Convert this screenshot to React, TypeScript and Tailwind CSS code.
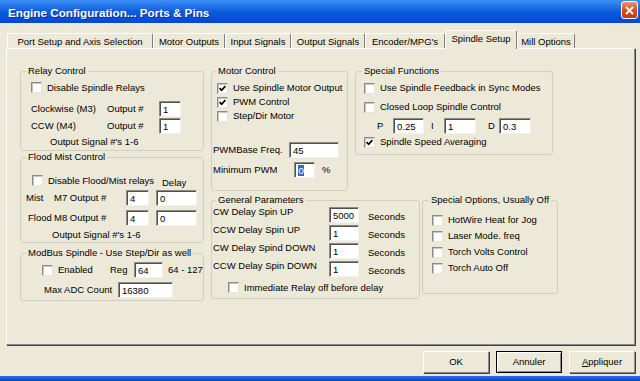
import React from "react";

const Check = ({ on }: { on?: boolean }) => (
  <span className="w-[11px] h-[11px] shrink-0 bg-white border border-t-[#8c8c8c] border-l-[#8c8c8c] border-r-[#e6e4d8] border-b-[#e6e4d8] shadow-[inset_1px_1px_0_#c9c7bb] flex items-center justify-center">
    {on && (
      <svg width="7" height="7" viewBox="0 0 7 7">
        <path d="M0.6 3.2 L2.6 5.3 L6.4 1.2" stroke="#000" strokeWidth="1.7" fill="none" />
      </svg>
    )}
  </span>
);

const Field = ({ className, children }: { className: string; children?: React.ReactNode }) => (
  <div className={`h-[16px] shrink-0 bg-white border border-t-[#8a8a8a] border-l-[#8a8a8a] border-r-[#f3f2ec] border-b-[#f3f2ec] shadow-[inset_1px_1px_0_#505050] flex items-center pl-[3px] pt-[1px] ${className}`}>
    {children}
  </div>
);

const Group = ({ title, lx, className, children }: any) => (
  <div className={`relative shrink-0 border border-[#d0d0bf] rounded-[3px] flex flex-col ${className}`}>
    <span className={`absolute -top-[7px] ${lx} bg-[#ece9d8] px-[2px] leading-[12px] whitespace-nowrap`}>{title}</span>
    {children}
  </div>
);

const CheckRow = ({ on, label, className }: any) => (
  <div className={`flex items-center whitespace-nowrap overflow-hidden ${className}`}>
    <Check on={on} />
    <span className="ml-[5px]">{label}</span>
  </div>
);

const tabs = [
  { label: "Port Setup and Axis Selection", w: "w-[146px]" },
  { label: "Motor Outputs", w: "w-[72px]" },
  { label: "Input Signals", w: "w-[66px]" },
  { label: "Output Signals", w: "w-[74px]" },
  { label: "Encoder/MPG's", w: "w-[80px]" },
  { label: "Spindle Setup", w: "w-[72px]", sel: true },
  { label: "Mill Options", w: "w-[58px]" },
];

const delays = [
  ["CW Delay Spin UP", "5000"],
  ["CCW Delay Spin UP", "1"],
  ["CW Delay Spind DOWN", "1"],
  ["CCW Delay Spin DOWN", "1"],
];

export default function App() {
  return (
    <div className="w-[640px] h-[381px] bg-[#ece9d8] flex flex-col overflow-hidden font-['Liberation_Sans',Arial,sans-serif] text-[9.5px] leading-[12px] text-black">
      {/* title bar */}
      <div className="h-[23px] shrink-0 flex items-start justify-between pl-[8px] pr-[2px] bg-linear-to-b from-[#3d8ff7] via-[#0a5ddd] to-[#0448cf]">
        <span className="mt-[6px] text-white font-bold text-[11.7px] leading-[14px] [text-shadow:1px_1px_0_#0b2f8e]">Engine Configuration... Ports &amp; Pins</span>
        <div className="mt-[1px] w-[17px] h-[18px] rounded-[3px] border border-white bg-linear-to-b from-[#ec9173] via-[#da4b22] to-[#c23a14] flex items-center justify-center">
          <svg width="9" height="9" viewBox="0 0 9 9">
            <path d="M1 1 L8 8 M8 1 L1 8" stroke="#fff" strokeWidth="1.8" />
          </svg>
        </div>
      </div>

      {/* tabs */}
      <div className="mt-[7px] h-[18px] shrink-0 flex items-end pl-[7px] relative z-10">
        {tabs.map((t) =>
          t.sel ? (
            <div key={t.label} className={`${t.w} h-[19px] -mb-[1px] bg-[#ece9d8] border-t border-l border-r border-t-white border-l-white border-r-[#7d7d7d] rounded-t-[2px] flex items-center justify-center pb-[2px] whitespace-nowrap`}>
              {t.label}
            </div>
          ) : (
            <div key={t.label} className={`${t.w} h-[15px] bg-[#ece9d8] border-t border-l border-r border-t-white border-l-white border-r-[#7d7d7d] rounded-t-[2px] flex items-center justify-center pt-[1px] whitespace-nowrap`}>
              {t.label}
            </div>
          )
        )}
      </div>

      {/* panel */}
      <div className="ml-[6px] mr-[5px] h-[297px] shrink-0 border border-t-white border-l-white border-r-[#8a8a8a] border-b-[#8a8a8a] shadow-[1px_1px_0_#404040] flex items-start pt-[22px] pl-[13px]">
        {/* left column */}
        <div className="w-[184px] flex flex-col">
          <Group title="Relay Control" lx="left-[5px]" className="h-[80px] pt-[9px]">
            <CheckRow label="Disable Spindle Relays" className="h-[13px] pl-[10px]" />
            <div className="mt-[7px] h-[16px] flex items-center pl-[10px]">
              <span className="w-[76px]">Clockwise (M3)</span>
              <span className="w-[52px]">Output #</span>
              <Field className="w-[22px]">1</Field>
            </div>
            <div className="mt-[1px] h-[16px] flex items-center pl-[10px]">
              <span className="w-[76px]">CCW (M4)</span>
              <span className="w-[52px]">Output #</span>
              <Field className="w-[22px]">1</Field>
            </div>
            <div className="mt-[2px] h-[12px] pl-[29px]">Output Signal #'s 1-6</div>
          </Group>

          <Group title="Flood Mist Control" lx="left-[5px]" className="mt-[6px] h-[86px] pt-[16px]">
            <div className="h-[16px] flex items-start">
              <CheckRow label="Disable Flood/Mist relays" className="w-[141px] h-[13px] pl-[11px]" />
              <span className="mt-[3px]">Delay</span>
            </div>
            <div className="h-[16px] flex items-center">
              <span className="w-[33px] pl-[5px]">Mist</span>
              <span className="w-[72px]">M7 Output #</span>
              <Field className="w-[23px]">4</Field>
              <Field className="ml-[7px] w-[41px]">0</Field>
            </div>
            <div className="mt-[4px] h-[16px] flex items-center">
              <span className="w-[33px] pl-[7px]">Flood</span>
              <span className="w-[72px]">M8 Output #</span>
              <Field className="w-[23px]">4</Field>
              <Field className="ml-[7px] w-[41px]">0</Field>
            </div>
            <div className="mt-[3px] h-[12px] pl-[31px]">Output Signal #'s 1-6</div>
          </Group>

          <Group title="ModBus Spindle - Use Step/Dir as well" lx="left-[5px]" className="mt-[10px] h-[48px] pt-[8px]">
            <div className="h-[16px] flex items-center pl-[21px]">
              <Check />
              <span className="ml-[5px] w-[52px]">Enabled</span>
              <span className="w-[24px]">Reg</span>
              <Field className="w-[29px]">64</Field>
              <span className="ml-[5px]">64 - 127</span>
            </div>
            <div className="mt-[4px] h-[16px] flex items-center pl-[23px]">
              <span className="w-[74px]">Max ADC Count</span>
              <Field className="w-[55px]">16380</Field>
            </div>
          </Group>
        </div>

        {/* right area */}
        <div className="ml-[7px] flex flex-col">
          <div className="flex items-start">
            <Group title="Motor Control" lx="left-[4px]" className="w-[137px] h-[120px] pt-[9px]">
              <CheckRow on label="Use Spindle Motor Output" className="h-[14px] pl-[5px]" />
              <CheckRow on label="PWM Control" className="h-[14px] pl-[5px]" />
              <CheckRow label="Step/Dir Motor" className="h-[14px] pl-[5px]" />
              <div className="mt-[19px] h-[16px] flex items-center pl-[1px]">
                <span className="w-[76px]">PWMBase Freq.</span>
                <Field className="w-[50px]">45</Field>
              </div>
              <div className="mt-[4px] h-[16px] flex items-center pl-[1px]">
                <span className="w-[81px]">Minimum PWM</span>
                <Field className="w-[21px]">
                  <span className="bg-[#316ac5] text-white px-[0.5px] leading-[11px]">0</span>
                </Field>
                <span className="ml-[7px]">%</span>
              </div>
            </Group>

            <Group title="Special Functions" lx="left-[6px]" className="ml-[7px] w-[198px] h-[84px] pt-[9px]">
              <CheckRow label="Use Spindle Feedback in Sync Modes" className="h-[14px] pl-[8px] pr-[1px]" />
              <CheckRow label="Closed Loop Spindle Control" className="mt-[5px] h-[14px] pl-[8px]" />
              <div className="mt-[4px] h-[16px] flex items-center pl-[21px]">
                <span className="w-[16px]">P</span>
                <Field className="w-[31px]">0.25</Field>
                <span className="ml-[7px] w-[13px]">I</span>
                <Field className="w-[32px]">1</Field>
                <span className="ml-[12px] w-[11px]">D</span>
                <Field className="w-[32px]">0.3</Field>
              </div>
              <CheckRow on label="Spindle Speed Averaging" className="mt-[1px] h-[14px] pl-[8px]" />
            </Group>
          </div>

          <div className="mt-[9px] flex items-start">
            <Group title="General Parameters" lx="left-[4px]" className="w-[209px] h-[99px] pt-[6px]">
              {delays.map(([label, v], i) => (
                <div key={label} className={`h-[16px] flex items-start pl-[1px] ${i > 0 ? "mt-[2px]" : ""}`}>
                  <span className="w-[116px] -mt-[1px]">{label}</span>
                  <Field className="w-[30px]">{v}</Field>
                  <span className="ml-[9px] mt-[4px]">Seconds</span>
                </div>
              ))}
              <CheckRow label="Immediate Relay off before delay" className="mt-[4px] h-[13px] pl-[16px]" />
            </Group>

            <Group title="Special Options, Usually Off" lx="left-[6px]" className="ml-[2px] w-[136px] h-[94px] pt-[11px]">
              <CheckRow label="HotWire Heat for Jog" className="h-[16px] pl-[9px]" />
              <CheckRow label="Laser Mode. freq" className="h-[16px] pl-[9px]" />
              <CheckRow label="Torch Volts Control" className="h-[16px] pl-[9px]" />
              <CheckRow label="Torch Auto Off" className="h-[16px] pl-[9px]" />
            </Group>
          </div>
        </div>
      </div>

      {/* buttons */}
      <div className="mt-[6px] h-[22px] shrink-0 flex justify-end gap-[7px] pr-[5px]">
        <button className="w-[66px] h-[22px] bg-[#ece9d8] border border-t-white border-l-white border-r-[#8a8a8a] border-b-[#8a8a8a] shadow-[1px_1px_0_#404040]">OK</button>
        <button className="w-[66px] h-[22px] bg-[#ece9d8] border border-black shadow-[inset_1px_1px_0_#fff,inset_-1px_-1px_0_#8a8a8a]">Annuler</button>
        <button className="w-[66px] h-[22px] bg-[#ece9d8] border border-t-white border-l-white border-r-[#8a8a8a] border-b-[#8a8a8a] shadow-[1px_1px_0_#404040]">
          <span className="underline">A</span>ppliquer
        </button>
      </div>

      {/* window frame bottom */}
      <div className="mt-[3px] h-[5px] shrink-0 bg-linear-to-b from-[#2f72ee] to-[#0140bd]" />
    </div>
  );
}
